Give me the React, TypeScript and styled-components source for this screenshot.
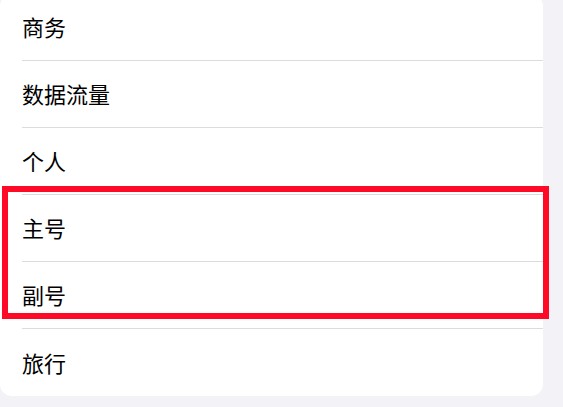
import React from 'react'
import styled, { createGlobalStyle } from 'styled-components'

const GlobalStyle = createGlobalStyle`
  html, body {
    margin: 0;
    padding: 0;
    background: #f2f2f7;
    overflow: hidden;
  }
  body {
    font-family: "Noto Sans CJK SC", "Noto Sans", sans-serif;
    -webkit-font-smoothing: antialiased;
  }
`

const Page = styled.div`
  width: 563px;
  height: 407px;
  background: #f2f2f7;
  overflow: hidden;
`

const Card = styled.div`
  margin-top: -6px;
  width: 543px;
  background: #ffffff;
  border-radius: 12px;
`

const Row = styled.div`
  padding-left: 22px;
`

const RowInner = styled.div<{ $last?: boolean }>`
  height: 67px;
  display: flex;
  align-items: center;
  border-bottom: ${p => (p.$last ? 'none' : '1px solid #dcdce0')};
  font-size: 22px;
  color: #000000;
  padding-bottom: 2px;
  box-sizing: border-box;
`

const Highlight = styled.div`
  position: relative;

  &::after {
    content: '';
    position: absolute;
    top: -9px;
    left: 2px;
    right: -6px;
    bottom: 10px;
    border: 6px solid #ff0a26;
    pointer-events: none;
  }
`

const items = ['商务', '数据流量', '个人']
const highlighted = ['主号', '副号']
const tail = ['旅行']

export default function App() {
    return (
        <Page>
            <GlobalStyle />
            <Card>
                {items.map(label => (
                    <Row key={label}>
                        <RowInner>{label}</RowInner>
                    </Row>
                ))}
                <Highlight>
                    {highlighted.map(label => (
                        <Row key={label}>
                            <RowInner>{label}</RowInner>
                        </Row>
                    ))}
                </Highlight>
                {tail.map(label => (
                    <Row key={label}>
                        <RowInner $last>{label}</RowInner>
                    </Row>
                ))}
            </Card>
        </Page>
    )
}
